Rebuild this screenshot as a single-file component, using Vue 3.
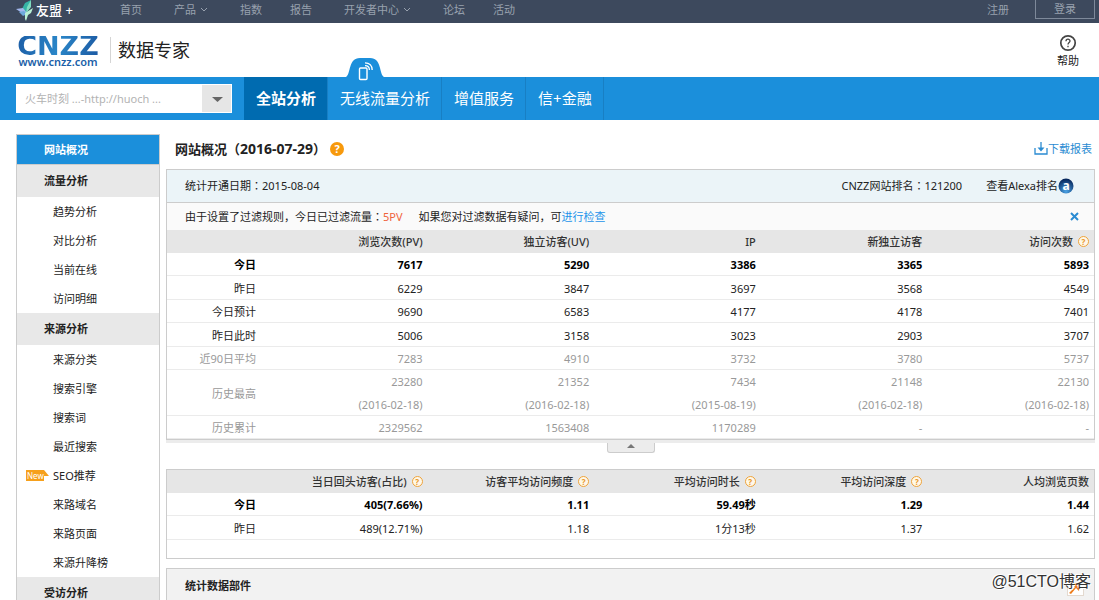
<script setup>
import { ref } from 'vue'

const site = ref('huoch')
const noticeOpen = ref(true)
const topLinks = [
  { text: '首页' },
  { text: '产品', menu: true },
  { text: '指数' },
  { text: '报告' },
  { text: '开发者中心', menu: true },
  { text: '论坛' },
  { text: '活动' },
]
const tabs = [
  { text: '全站分析', active: true },
  { text: '无线流量分析', mobile: true },
  { text: '增值服务' },
  { text: '信+金融' },
]
const menu = [
  { title: '流量分析', items: ['趋势分析', '对比分析', '当前在线', '访问明细'] },
  { title: '来源分析', items: ['来源分类', '搜索引擎', '搜索词', '最近搜索', 'SEO推荐', '来路域名', '来路页面', '来源升降榜'] },
  { title: '受访分析', items: [] },
]
const visitHeads = [
  { text: '浏览次数(PV)' },
  { text: '独立访客(UV)' },
  { text: 'IP' },
  { text: '新独立访客' },
  { text: '访问次数', help: true },
]
const peak = ['2016-02-18', '2016-02-18', '2015-08-19', '2016-02-18', '2016-02-18']
const visitRows = [
  { label: '今日', kind: 'strong', cells: ['7617', '5290', '3386', '3365', '5893'] },
  { label: '昨日', cells: ['6229', '3847', '3697', '3568', '4549'] },
  { label: '今日预计', cells: ['9690', '6583', '4177', '4178', '7401'] },
  { label: '昨日此时', cells: ['5006', '3158', '3023', '2903', '3707'] },
  { label: '近90日平均', kind: 'muted', cells: ['7283', '4910', '3732', '3780', '5737'] },
  { label: '历史最高', kind: 'muted', dates: peak, cells: ['23280', '21352', '7434', '21148', '22130'] },
  { label: '历史累计', kind: 'muted', cells: ['2329562', '1563408', '1170289', '-', '-'] },
]
const loyaltyHeads = [
  { text: '当日回头访客(占比)', help: true },
  { text: '访客平均访问频度', help: true },
  { text: '平均访问时长', help: true },
  { text: '平均访问深度', help: true },
  { text: '人均浏览页数' },
]
const loyaltyRows = [
  { label: '今日', kind: 'strong', cells: ['405(7.66%)', '1.11', '59.49秒', '1.29', '1.44'] },
  { label: '昨日', cells: ['489(12.71%)', '1.18', '1分13秒', '1.37', '1.62'] },
]
</script>

<template>
  <div class="page">
    <header class="topbar">
      <a href="#" class="brand">
        <svg width="20" height="21" viewBox="0 0 20 21" aria-hidden="true">
          <path d="M15 0 L9 3 L6 9 L10 13 L14 8 Z" fill="#35b3a6" />
          <path d="M15 0 L15 7 L10 13 L11 7 Z" fill="#7fdcc0" />
          <path d="M0 9 L7 8 L11 13 L6 13 Z" fill="#a3b8ee" />
          <path d="M3 12 L8 11 L11 14 L7 16 Z" fill="#6da9dc" />
          <path d="M9 13 L17 8 L15 13 L12 15 L10 21 L9 19 Z" fill="#b9f1d5" />
        </svg>
        <span>友盟 +</span>
      </a>
      <nav class="toplinks">
        <a v-for="l in topLinks" :key="l.text" href="#" :class="{ drop: l.menu }">{{ l.text
          }}<svg v-if="l.menu" width="8" height="6" viewBox="0 0 8 6" aria-hidden="true">
            <path d="M1 1 L4 4 L7 1" fill="none" stroke="currentColor" /></svg></a>
      </nav>
      <a href="#" class="register">注册</a>
      <button type="button" class="login">登录</button>
    </header>

    <div class="masthead">
      <a href="#" class="logo"><b>CNZZ</b><span>www.cnzz.com</span></a>
      <h1>数据专家</h1>
      <a href="#" class="help">
        <svg width="18" height="18" viewBox="0 0 18 18" aria-hidden="true">
          <circle cx="9" cy="9" r="7.2" fill="none" stroke="#444" stroke-width="1.7" />
          <path d="M7 7.2 C7 4.6 11 4.6 11 7 C11 8.4 9 8.6 9 10.4 M9 11.8 V13.2" fill="none" stroke="#444" stroke-width="1.3" />
        </svg>
        <span>帮助</span>
      </a>
    </div>

    <nav class="mainnav">
      <div class="picker">
        <select v-model="site" aria-label="站点">
          <option value="huoch">火车时刻 ...-http://huoch ...</option>
        </select>
        <svg width="29" height="27" viewBox="0 0 29 27" aria-hidden="true">
          <rect width="29" height="27" fill="#e6e6e6" />
          <path d="M10 12 H21 L15.5 17 Z" fill="#666" />
        </svg>
      </div>
      <div class="tabs">
        <a v-for="t in tabs" :key="t.text" href="#" :class="{ active: t.active }">
          {{ t.text }}
          <svg v-if="t.mobile" class="bump" width="38" height="28" viewBox="0 0 38 28" aria-hidden="true">
            <path d="M0 20 C5 17 2 1 14 1 H24 C36 1 33 17 38 20 Z" fill="#1b8fdb" />
            <rect x="13.5" y="11" width="7.5" height="11.5" rx="1" fill="none" stroke="#fff" stroke-width="1.4" />
            <path d="M19 8.6 C21.6 8.6 23.4 10.4 23.4 13 M19 5.8 C23.4 5.8 26.2 8.6 26.2 13" fill="none" stroke="#fff" stroke-width="1.3" />
          </svg>
        </a>
      </div>
    </nav>

    <div class="body">
      <aside class="sidebar">
        <a href="#" class="current">网站概况</a>
        <section v-for="g in menu" :key="g.title">
          <h2>{{ g.title }}</h2>
          <a v-for="i in g.items" :key="i" href="#">
            <span v-if="i === 'SEO推荐'" class="new">New</span>{{ i }}
          </a>
        </section>
      </aside>

      <main>
        <div class="title">
          <h2>网站概况（<time>2016-07-29</time>）</h2>
          <span class="badge">?</span>
          <a href="#" class="download">
            <svg width="14" height="13" viewBox="0 0 14 13" aria-hidden="true">
              <path d="M1 6 V12 H13 V6 M7 0 V8" fill="none" stroke="currentColor" stroke-width="1.3" />
              <path d="M3.5 5.5 H10.5 L7 9.5 Z" fill="currentColor" />
            </svg>下载报表</a>
        </div>

        <section class="card">
          <div class="info">
            <span>统计开通日期<i>：</i>2015-08-04</span>
            <span class="rank">CNZZ网站排名<i>：</i>121200</span>
            <a href="#">查看Alexa排名<svg width="16" height="16" viewBox="0 0 16 16" aria-hidden="true">
              <defs>
                <radialGradient id="orb" cx="50%" cy="85%" r="80%">
                  <stop offset="0" stop-color="#4aa3e6" />
                  <stop offset="1" stop-color="#06265c" />
                </radialGradient>
              </defs>
              <circle cx="8" cy="8" r="7.5" fill="url(#orb)" />
              <text x="8" y="12" text-anchor="middle" font-size="12" font-weight="bold" fill="#fff">a</text>
            </svg></a>
          </div>
          <div v-if="noticeOpen" class="notice">
            <span>由于设置了过滤规则，今日已过滤流量<i>：</i><em>5PV</em></span>
            <span>如果您对过滤数据有疑问，可<a href="#">进行检查</a></span>
            <button type="button" aria-label="关闭" @click="noticeOpen = false">
              <svg width="9" height="9" viewBox="0 0 9 9"><path d="M1 1 L8 8 M8 1 L1 8" stroke="#2a8bd2" stroke-width="2" /></svg>
            </button>
          </div>
          <table>
            <thead>
              <tr>
                <th></th>
                <th v-for="h in visitHeads" :key="h.text" scope="col">{{ h.text }}<span v-if="h.help" class="tip">?</span></th>
              </tr>
            </thead>
            <tbody>
              <tr v-for="r in visitRows" :key="r.label" :class="r.kind">
                <th scope="row">{{ r.label }}</th>
                <td v-for="(c, n) in r.cells" :key="n">{{ c }}<div v-if="r.dates">({{ r.dates[n] }})</div></td>
              </tr>
            </tbody>
          </table>
        </section>
        <div class="fold"><button type="button" aria-label="收起"></button></div>

        <section class="card loyalty">
          <table>
            <thead>
              <tr>
                <th></th>
                <th v-for="h in loyaltyHeads" :key="h.text" scope="col">{{ h.text }}<span v-if="h.help" class="tip">?</span></th>
              </tr>
            </thead>
            <tbody>
              <tr v-for="r in loyaltyRows" :key="r.label" :class="r.kind">
                <th scope="row">{{ r.label }}</th>
                <td v-for="(c, n) in r.cells" :key="n">{{ c }}</td>
              </tr>
            </tbody>
          </table>
        </section>

        <section class="card widgets">
          <h2>统计数据部件</h2>
          <svg width="18" height="16" viewBox="0 0 18 16" aria-hidden="true">
            <rect x="0.5" y="1.5" width="16" height="13" fill="#fff" stroke="#e3d9cf" />
            <path d="M2 12 L8 6 L5 3 L13 2 L12 10 L9 7 L4 13 Z" fill="#ee7d1d" />
          </svg>
        </section>
      </main>
    </div>
    <div class="watermark">@51CTO博客</div>
  </div>
</template>

<style>
body {
  margin: 0;
  background: #fff;
}
</style>

<style scoped>
.page {
  position: relative;
  height: 100vh;
  overflow: hidden;
  font: 11px/23px "Noto Sans", "Noto Sans CJK SC", sans-serif;
  color: #222;
}
a {
  color: inherit;
  text-decoration: none;
}
h1,
h2 {
  margin: 0;
  font-size: inherit;
}
button {
  font: inherit;
  padding: 0;
  cursor: pointer;
}
svg {
  display: block;
  flex: none;
}
i {
  font-family: "Noto Sans CJK TC", sans-serif;
  font-style: normal;
  line-height: 1;
}

.topbar {
  display: flex;
  height: 23px;
  box-sizing: border-box;
  padding: 0 4px 0 16px;
  background: #3d495d;
  color: #98a1ae;
  line-height: 19px;
}
.brand {
  display: flex;
  width: 104px;
  color: #fff;
  font-size: 13px;
  font-weight: 500;
  line-height: 21px;
}
.toplinks {
  display: flex;
  flex: 1;
  gap: 28px;
}
.toplinks .drop {
  display: flex;
  align-items: center;
  gap: 4px;
  height: 19px;
  margin: 0 4px;
}
.register {
  margin-right: 26px;
}
.login {
  width: 60px;
  height: 19px;
  border: 1px solid #7e899a;
  border-top: 0;
  background: none;
  color: inherit;
  line-height: 18px;
}

.masthead {
  display: flex;
  align-items: center;
  height: 54px;
  padding: 0 20px 0 16px;
}
.logo {
  display: flex;
  flex-direction: column;
  align-items: center;
  width: 84px;
  padding-top: 3px;
  color: #1b5fa8;
}
.logo b {
  font: bold 27px/20px "DejaVu Sans", sans-serif;
  background: linear-gradient(100deg, #1d5ea6, #2a86c8 50%, #1c5aa3);
  background-clip: text;
  color: transparent;
}
.logo span {
  font-size: 11px;
  font-weight: 600;
  line-height: 12px;
}
h1 {
  margin-left: 10px;
  padding-left: 7px;
  border-left: 1px solid #d5d5d5;
  font-size: 18px;
  font-weight: 400;
  line-height: 26px;
}
.help {
  display: flex;
  flex-direction: column;
  align-items: center;
  margin-left: auto;
  padding-top: 2px;
  line-height: 17px;
}

.mainnav {
  display: flex;
  align-items: center;
  gap: 12px;
  height: 43px;
  padding-left: 16px;
  background: #1b8fdb;
}
.picker {
  display: grid;
  align-items: center;
  width: 216px;
  height: 29px;
  background: #fff;
}
.picker > * {
  grid-area: 1 / 1;
}
.picker svg {
  justify-self: end;
  margin-right: 1px;
  pointer-events: none;
}
select {
  appearance: none;
  width: 100%;
  height: 29px;
  padding: 0 34px 0 9px;
  border: 0;
  background: none;
  color: #b3b3b3;
  font: inherit;
}
.tabs {
  display: flex;
  height: 43px;
}
.tabs a {
  position: relative;
  padding: 0 11px 0 12px;
  border-right: 1px solid #187fc4;
  color: #fff;
  font-size: 15px;
  line-height: 43px;
}
.tabs .active {
  background: #006bb0;
  font-weight: 700;
}
.bump {
  position: absolute;
  top: -20px;
  left: 18px;
}

.body {
  display: flex;
  align-items: flex-start;
  gap: 6px;
  padding: 14px 4px 0 16px;
}
.sidebar {
  flex: none;
  box-sizing: border-box;
  width: 144px;
  border: 1px solid #ccc;
}
.sidebar a {
  display: block;
  position: relative;
  padding-left: 36px;
  line-height: 29px;
}
.sidebar .current {
  padding-left: 27px;
  border-bottom: 1px solid #ccc;
  background: #1b8fdb;
  color: #fff;
  font-weight: 700;
}
.sidebar h2 {
  padding-left: 27px;
  background: #e8e8e8;
  line-height: 32px;
}
.new {
  position: absolute;
  top: 9px;
  left: 9px;
  width: 23px;
  box-sizing: border-box;
  padding-left: 1px;
  background: #f6a01c;
  clip-path: polygon(0 0, 18px 0, 23px 6px, 18px 6px, 18px 100%, 0 100%);
  color: #fff;
  font-size: 8px;
  line-height: 11px;
}

main {
  flex: 1;
  min-width: 0;
}
.title {
  display: flex;
  align-items: center;
  height: 35px;
  padding: 0 3px 6px 9px;
  box-sizing: border-box;
}
.title h2 {
  font-size: 13px;
}
.title time {
  font-size: 14px;
}
.badge {
  width: 14px;
  margin-left: 4px;
  border-radius: 50%;
  background: #f7990c;
  color: #fff;
  font-weight: 700;
  line-height: 14px;
  text-align: center;
}
.download {
  display: flex;
  align-items: center;
  margin-left: auto;
  color: #2a8bd2;
}
.card {
  border: 1px solid #ccc;
}
.info {
  display: flex;
  gap: 24px;
  padding: 0 20px 0 18px;
  border-bottom: 1px solid #ccc;
  background: #ebf4f8;
  line-height: 32px;
}
.info a {
  display: flex;
  align-items: center;
}
.rank {
  margin-left: auto;
}
.notice {
  display: flex;
  gap: 16px;
  padding: 0 15px 0 18px;
  background: #fafafa;
  line-height: 27px;
}
.notice em {
  color: #f0633a;
  font-style: normal;
}
.notice a {
  color: #2393ea;
}
.notice button {
  margin-left: auto;
  border: 0;
  background: none;
}
table {
  width: 100%;
  border-collapse: collapse;
  table-layout: fixed;
}
th,
td {
  padding: 0 5px 0 0;
  text-align: right;
}
th:first-child {
  width: 89px;
}
thead {
  background: #e6e6e6;
  color: #333;
}
thead th {
  font-weight: 500;
}
tbody tr {
  height: 23px;
  box-shadow: inset 0 -1px #ebebeb;
}
tbody tr:nth-child(even) {
  height: 24px;
}
tbody th {
  font-weight: 400;
}
.strong,
.strong th {
  color: #000;
  font-weight: 700;
}
.muted {
  color: #999;
}
.tip {
  display: inline-block;
  box-sizing: border-box;
  width: 11px;
  margin-left: 5px;
  border: 1px solid #eda33c;
  border-radius: 50%;
  background: #fff8e8;
  color: #e8962a;
  font-size: 8px;
  font-weight: 700;
  line-height: 9px;
  text-align: center;
  vertical-align: 1px;
}
.fold {
  display: flex;
  justify-content: center;
  align-items: flex-start;
  height: 29px;
  box-sizing: border-box;
  border-top: 3px solid #ececec;
}
.fold button {
  width: 48px;
  height: 10px;
  border: 1px solid #ccc;
  border-top: 0;
  border-radius: 0 0 3px 3px;
  background: #ececec;
}
.fold button::before {
  content: "";
  display: block;
  width: 0;
  margin: -3px auto 0;
  border: 4px solid transparent;
  border-top: 0;
  border-bottom-color: #777;
}
.loyalty {
  padding-bottom: 18px;
}
.widgets {
  display: flex;
  align-items: flex-start;
  justify-content: space-between;
  height: 60px;
  margin-top: 9px;
  padding: 0 9px 0 18px;
  background: #f2f2f2;
  line-height: 33px;
}
.widgets svg {
  margin-top: 12px;
}
.watermark {
  position: absolute;
  right: 8px;
  bottom: 7px;
  color: #333;
  font-family: "Liberation Sans", "Noto Sans CJK SC", sans-serif;
  font-size: 16px;
  text-shadow: -1px -1px #fff, 1px 1px #fff;
}
</style>
